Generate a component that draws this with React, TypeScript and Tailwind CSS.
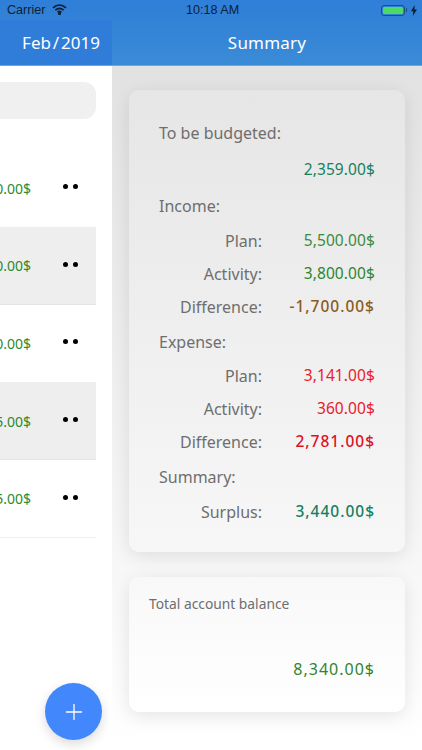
import { Plus } from 'lucide-react'

const font = "font-['Noto_Sans',sans-serif]"

const listRows = [
  { amount: '2,300.00$', grey: false },
  { amount: '1,200.00$', grey: true },
  { amount: '1,500.00$', grey: false },
  { amount: '3,125.00$', grey: true },
  { amount: '1,875.00$', grey: false },
]

function Row({ label, value, color, strong = false, className = '' }: { label: string; value: string; color: string; strong?: boolean; className?: string }) {
  return (
    <div className={`flex h-[33px] items-center ${className}`}>
      <div className="w-[103px] text-right text-[#6e6e6e]">{label}</div>
      <div className={`-mr-[1px] flex-1 text-right ${strong ? 'text-[15.5px] font-medium tracking-[1px]' : 'text-[15.5px] tracking-[0.1px]'} ${color}`}>{value}</div>
    </div>
  )
}

function Heading({ children, className = '' }: { children: string; className?: string }) {
  return <div className={`flex h-[33px] items-center text-[#6e6e6e] ${className}`}>{children}</div>
}

export default function App() {
  return (
    <div className={`relative flex h-[750px] w-[422px] flex-col overflow-hidden bg-white ${font}`}>
      {/* Header with status bar */}
      <div className="h-[66px] shrink-0 border-b border-[#6ea6dc] bg-gradient-to-b from-[#2f7ed8] to-[#3a8bd6]">
        <div className="relative flex h-[20px] items-center justify-between pl-[7px] pr-[5px] font-['Liberation_Sans',sans-serif] text-[12.6px] text-[#0f2033]">
          <div className="flex items-center gap-[7px]">
            <span>Carrier</span>
            <svg width="15" height="11" viewBox="0 0 15 11" fill="none" stroke="#0f2033" strokeWidth="1.7">
              <path d="M1 3.8C5 .2 10 .2 14 3.8" />
              <path d="M3.3 6.1C5.9 3.9 9.1 3.9 11.7 6.1" />
              <path d="M5.6 8.2C6.8 7.3 8.2 7.3 9.4 8.2" />
              <circle cx="7.5" cy="9.6" r=".7" fill="#0f2033" />
            </svg>
          </div>
          <span className="absolute left-[186px] font-medium">10:18 AM</span>
          <div className="flex items-center">
            <div className="flex h-[11px] w-[24px] items-center rounded-[3px] border border-[#1e4f80] p-[1px]">
              <div className="h-full w-full rounded-[1.5px] bg-[#4cd964]" />
            </div>
            <div className="ml-[1px] h-[4px] w-[1px] bg-[#1e4f80]" />
            <svg className="ml-[4px]" width="6" height="11" viewBox="0 0 6 11" fill="#0f2033">
              <path d="M3.6 0 0 6.2h2.3L1.8 11 6 4.4H3.5z" />
            </svg>
          </div>
        </div>
        <div className="flex h-[45px] text-white">
          <div className="flex w-[112px] items-center justify-end bg-[#2f7dd9] pr-[12px] text-[17px] [word-spacing:-2.5px]">Feb / 2019</div>
          <div className="flex flex-1 items-center justify-center text-[17px] tracking-[0.2px]">Summary</div>
        </div>
      </div>

      <div className="flex flex-1">
        {/* Month list, cut off on the left by the split view */}
        <div className="w-[112px] shrink-0 overflow-hidden bg-white">
          <div className="ml-[-200px] w-[296px] pt-[16px]">
            <div className="h-[37px] rounded-[12px] bg-[#f0f0f0]" />
            <div className="mt-[31px]">
              {listRows.map((row, i) => (
                <div
                  key={i}
                  className={`flex h-[77.6px] items-center border-b ${row.grey ? 'border-[#e4e4e4] bg-[#eeeeee]' : 'border-[#eeeeee] bg-white'}`}
                >
                  <div className="w-[231px] text-right text-[14px] text-[#2b8a2b]">{row.amount}</div>
                  <div className="mb-[3px] ml-[32px] flex gap-[5px]">
                    <div className="h-[5px] w-[5px] rounded-full bg-black" />
                    <div className="h-[5px] w-[5px] rounded-full bg-black" />
                  </div>
                </div>
              ))}
            </div>
          </div>
        </div>

        {/* Summary panel */}
        <div className="flex flex-1 flex-col bg-gradient-to-b from-[#e2e2e2] to-white pl-[17px] pr-[17px] pt-[24px]">
          <div className="h-[462px] rounded-[10px] bg-gradient-to-b from-[#e6e6e6] to-[#f7f7f7] pl-[30px] pr-[31px] pt-[26px] text-[16px] shadow-[0_4px_18px_rgba(0,0,0,0.10)]">
            <Heading>To be budgeted:</Heading>
            <div className="-mr-[1px] mt-[4px] flex h-[33px] items-center justify-end text-[15.5px] tracking-[0.1px] text-[#16805f]">2,359.00$</div>
            <Heading className="mt-[3px]">Income:</Heading>
            <Row className="mt-[2px]" label="Plan:" value="5,500.00$" color="text-[#3d8a3d]" />
            <Row label="Activity:" value="3,800.00$" color="text-[#2f852f]" />
            <Row strong label="Difference:" value="-1,700.00$" color="text-[#8a5a1c]" />
            <Heading className="mt-[2px]">Expense:</Heading>
            <Row className="mt-[1px]" label="Plan:" value="3,141.00$" color="text-[#e8202a]" />
            <Row label="Activity:" value="360.00$" color="text-[#e8202a]" />
            <Row strong label="Difference:" value="2,781.00$" color="text-[#e0101c]" />
            <Heading className="mt-[2px]">Summary:</Heading>
            <Row strong className="mt-[2px]" label="Surplus:" value="3,440.00$" color="text-[#16805f]" />
          </div>

          <div className="mt-[25px] flex h-[135px] flex-col rounded-[10px] bg-gradient-to-b from-[#f8f8f8] to-white pl-[20px] pr-[31px] shadow-[0_4px_18px_rgba(0,0,0,0.10)]">
            <div className="mt-[17px] text-[13.8px] leading-[19px] text-[#6e6e6e]">Total account balance</div>
            <div className="-mr-[1px] mt-[44px] text-right text-[16px] tracking-[1px] text-[#2f852f]">8,340.00$</div>
          </div>
        </div>
      </div>

      {/* Add button */}
      <button className="absolute left-[45px] top-[683px] flex h-[57px] w-[57px] items-center justify-center rounded-full bg-[#4287fb] text-white shadow-[0_4px_12px_rgba(0,0,0,0.15)]">
        <Plus size={26} strokeWidth={1.2} />
      </button>
    </div>
  )
}
